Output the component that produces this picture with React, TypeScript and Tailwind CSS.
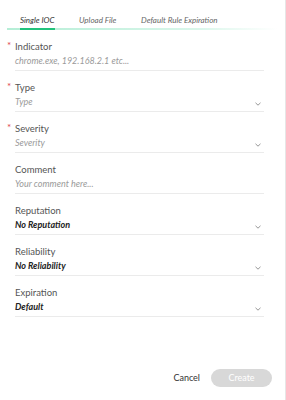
import React from "react";

const Chevron = () => (
  <svg width="6" height="4" viewBox="0 0 6 4" className="mr-[3px]">
    <path d="M0.5 0.8 L3 3.2 L5.5 0.8" fill="none" stroke="#8a8a8a" strokeWidth="0.9" />
  </svg>
);

type FieldProps = {
  label: string;
  required?: boolean;
  value: string;
  placeholder?: boolean;
  select?: boolean;
};

const Field = ({ label, required, value, placeholder, select }: FieldProps) => (
  <div className="mb-[10px] ml-[15px] mr-[21px]">
    <div className="relative h-[14px] text-[9.5px] leading-[14px] text-[#555]">
      {required && (
        <span className="absolute left-[-8px] top-[-2px] text-[10px] text-[#e0474c]">*</span>
      )}
      {label}
    </div>
    <div className="flex h-[17px] items-start justify-between border-b border-[#ebebeb] pb-[2px]">
      <span
        className={
          placeholder
            ? "text-[9px] italic leading-[14px] text-[#9a9a9a]"
            : "text-[9px] font-bold italic leading-[14px] text-[#222]"
        }
      >
        {value}
      </span>
      {select && (
        <span className="mt-[7px]">
          <Chevron />
        </span>
      )}
    </div>
  </div>
);

export default function App() {
  return (
    <div
      className="flex h-[400px] w-[286px] flex-col border-r border-[#e6e6e6] bg-white"
      style={{ fontFamily: "Lato, 'Open Sans', sans-serif" }}
    >
      <div className="relative ml-[7px] mr-[8px] mt-[13px]">
        <div className="flex items-center pl-[13px] text-[8px] italic leading-[14px]">
          <div className="relative w-[59px] text-[#333]">
            Single IOC
          </div>
          <div className="w-[62px] text-[#666]">Upload File</div>
          <div className="text-[#666]">Default Rule Expiration</div>
        </div>
        <div className="relative mt-[1px] h-[2px] bg-[linear-gradient(to_right,#b5eed6,#d9f6ea_70%,rgba(255,255,255,0))]">
          <div className="absolute left-[13px] top-0 h-[2px] w-[35px] bg-[#22c27c]" />
        </div>
      </div>

      <div className="mt-[10px]">
        <Field label="Indicator" required value="chrome.exe, 192.168.2.1 etc..." placeholder />
        <Field label="Type" required value="Type" placeholder select />
        <Field label="Severity" required value="Severity" placeholder select />
        <Field label="Comment" value="Your comment here..." placeholder />
        <Field label="Reputation" value="No Reputation" select />
        <Field label="Reliability" value="No Reliability" select />
        <Field label="Expiration" value="Default" select />
      </div>

      <div className="mt-auto mb-[13px] flex items-center justify-end pr-[13px]">
        <button className="mr-[11px] text-[9px] text-[#333]">Cancel</button>
        <button className="h-[18px] w-[61px] rounded-full bg-[#d8d8d8] text-[9px] text-white">
          Create
        </button>
      </div>
    </div>
  );
}
